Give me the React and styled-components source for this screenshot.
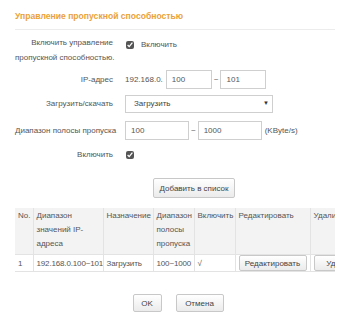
import React from "react";
import styled, { createGlobalStyle } from "styled-components";

const GlobalStyle = createGlobalStyle`
  html, body {
    margin: 0;
    padding: 0;
    background: #fff;
  }
  body {
    font-family: "Liberation Sans", Arial, sans-serif;
    font-size: 8px;
    color: #555;
  }
`;

const rows = [
  { no: 1, ip: "192.168.0.100~101", dir: "Загрузить", band: "100~1000", on: "√" },
];

function App() {
  return (
    <>
      <GlobalStyle />
      <S.Page>
        <S.Title>Управление пропускной способностью</S.Title>

        <S.Form>
          <S.Label>
            Включить управление
            <br />
            пропускной способностью.
          </S.Label>
          <S.Control $top>
            <S.Check checked readOnly />
            <span>Включить</span>
          </S.Control>

          <S.Label>IP-адрес</S.Label>
          <S.Control>
            <span>192.168.0.</span>
            <S.Input $w={46} defaultValue="100" />
            <S.Tilde>~</S.Tilde>
            <S.Input $w={46} defaultValue="101" />
          </S.Control>

          <S.Label>Загрузить/скачать</S.Label>
          <S.Control>
            <S.Select>
              <span>Загрузить</span>
              <S.Arrow>▼</S.Arrow>
            </S.Select>
          </S.Control>

          <S.Label $gap>Диапазон полосы пропуска</S.Label>
          <S.Control $gap>
            <S.Input $w={64} defaultValue="100" />
            <S.Tilde>~</S.Tilde>
            <S.Input $w={64} defaultValue="1000" />
            <span>(KByte/s)</span>
          </S.Control>

          <S.Label>Включить</S.Label>
          <S.Control>
            <S.Check checked readOnly />
          </S.Control>

          <span />
          <S.AddWrap>
            <S.Button $w={82} $h={20}>Добавить в список</S.Button>
          </S.AddWrap>
        </S.Form>

        <S.TableWrap>
          <S.Table>
            <colgroup>
              <col style={{ width: 18 }} />
              <col style={{ width: 70 }} />
              <col style={{ width: 50 }} />
              <col style={{ width: 41 }} />
              <col style={{ width: 41 }} />
              <col style={{ width: 75 }} />
              <col style={{ width: 60 }} />
            </colgroup>
            <thead>
              <tr>
                <S.Th>No.</S.Th>
                <S.Th>Диапазон значений IP-адреса</S.Th>
                <S.Th>Назначение</S.Th>
                <S.Th>Диапазон полосы пропуска</S.Th>
                <S.Th>Включить</S.Th>
                <S.Th>Редактировать</S.Th>
                <S.Th>Удалить</S.Th>
              </tr>
            </thead>
            <tbody>
              {rows.map((r) => (
                <tr key={r.no}>
                  <S.Td>{r.no}</S.Td>
                  <S.Td>{r.ip}</S.Td>
                  <S.Td>{r.dir}</S.Td>
                  <S.Td>{r.band}</S.Td>
                  <S.Td>{r.on}</S.Td>
                  <S.Td>
                    <S.Button $w={68} $h={16}>Редактировать</S.Button>
                  </S.Td>
                  <S.Td>
                    <S.Button $w={56} $h={16}>Удалить</S.Button>
                  </S.Td>
                </tr>
              ))}
            </tbody>
          </S.Table>
        </S.TableWrap>

        <S.Footer>
          <S.Button $w={29} $h={18}>OK</S.Button>
          <S.Button $w={48} $h={18}>Отмена</S.Button>
        </S.Footer>
      </S.Page>
    </>
  );
}

const S = {
  Page: styled.div`
    width: 320px;
    padding: 9px 13px 0 15px;
  `,

  Title: styled.h2`
    margin: 0;
    padding-bottom: 6px;
    border-bottom: 1px solid #ececec;
    color: #eaa23a;
    font-size: 8.6px;
    font-weight: bold;
    line-height: 14px;
  `,

  Form: styled.div`
    display: grid;
    grid-template-columns: 98px 1fr;
    column-gap: 12px;
    row-gap: 5px;
    margin-top: 5px;
  `,

  Label: styled.div`
    text-align: right;
    line-height: 15px;
    align-self: center;
    white-space: nowrap;
    margin-top: ${(p) => (p.$gap ? "3px" : "0")};
  `,

  Control: styled.div`
    display: flex;
    align-items: center;
    gap: 3px;
    align-self: ${(p) => (p.$top ? "start" : "center")};
    min-height: 19px;
    line-height: 15px;
    margin-top: ${(p) => (p.$gap ? "3px" : "0")};
  `,

  Check: styled.input.attrs({ type: "checkbox" })`
    width: 8px;
    height: 8px;
    margin: 0 4px 0 1px;
    accent-color: #555;
  `,

  Input: styled.input.attrs({ type: "text" })`
    box-sizing: border-box;
    width: ${(p) => p.$w}px;
    height: 19px;
    border: 1px solid #cfcfcf;
    padding: 0 5px;
    font-family: inherit;
    font-size: 8px;
    color: #555;
    outline: none;
  `,

  Tilde: styled.span`
    margin: 0 -1px;
  `,

  Select: styled.div`
    box-sizing: border-box;
    width: 148px;
    height: 18px;
    border: 1px solid #cfcfcf;
    display: flex;
    align-items: center;
    justify-content: space-between;
    padding: 0 3px 0 8px;
    color: #444;
  `,

  Arrow: styled.span`
    font-size: 6px;
    color: #333;
  `,

  AddWrap: styled.div`
    padding: 9px 0 0 28px;
  `,

  Button: styled.button`
    box-sizing: border-box;
    width: ${(p) => p.$w}px;
    height: ${(p) => p.$h}px;
    padding: 0;
    border: 1px solid #c8c8c8;
    border-radius: 2px;
    background: linear-gradient(#ffffff, #ebebeb);
    font-family: inherit;
    font-size: 8px;
    color: #444;
    white-space: nowrap;
    overflow: hidden;
    vertical-align: middle;
  `,

  TableWrap: styled.div`
    margin-top: 10px;
    width: 320px;
    overflow: hidden;
  `,

  Table: styled.table`
    width: 355px;
    table-layout: fixed;
    border-collapse: collapse;
    border-bottom: 1px solid #e3e3e3;
  `,

  Th: styled.th`
    background: #f3f3f3;
    border-left: 1px solid #e3e3e3;
    text-align: left;
    vertical-align: top;
    font-weight: normal;
    line-height: 14px;
    padding: 1px 2px 3px 3px;
    white-space: normal;
    overflow: hidden;

    &:first-child {
      border-left: none;
    }
  `,

  Td: styled.td`
    height: 17px;
    box-sizing: border-box;
    border-top: 1px solid #e3e3e3;
    border-left: 1px solid #e3e3e3;
    line-height: 15px;
    padding: 0 0 0 3px;
    letter-spacing: -0.15px;
    white-space: nowrap;
    overflow: hidden;

    &:first-child {
      border-left: none;
    }
  `,

  Footer: styled.div`
    display: flex;
    justify-content: center;
    gap: 14px;
    margin-top: 22px;
    padding-left: 6px;
  `,
};

export default App;
